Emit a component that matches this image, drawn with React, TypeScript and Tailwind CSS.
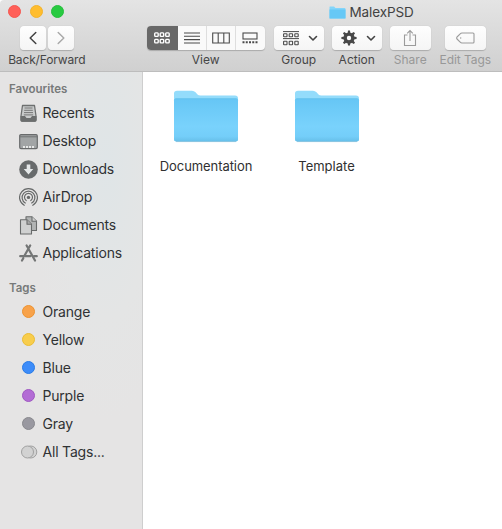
import type { ReactNode } from "react";

function BigFolder({ id }: { id: string }) {
  return (
    <svg width="66" height="54" viewBox="0 0 66 54">
      <defs>
        <linearGradient id={id} x1="0" y1="0" x2="0" y2="1">
          <stop offset="0" stopColor="#66c6f5" />
          <stop offset="0.65" stopColor="#79d2fc" />
          <stop offset="0.88" stopColor="#74cef9" />
          <stop offset="1" stopColor="#66bfe9" />
        </linearGradient>
      </defs>
      <path d="M1 3.500Q1 0.700 4 0.700H19Q21 0.700 22.500 2.200L24.500 4.500Q25.500 5.500 27.500 5.500H62Q65 5.500 65 8.500V49Q65 51.500 62.500 51.500H3.500Q1 51.500 1 49Z" fill="#94dcfb" />
      <path d="M1 10.500Q1 8.500 3 8.500H63Q65 8.500 65 10.500V49Q65 51.500 62.500 51.500H3.500Q1 51.500 1 49Z" fill={`url(#${id})`} />
      <path d="M1.500 9.500Q2 8.700 3 8.700H63Q64 8.700 64.500 9.500" fill="none" stroke="#5fbfea" strokeWidth="0.6" />
      <path d="M3 51.600H63" stroke="#7fb9d3" strokeWidth="0.6" />
    </svg>
  );
}

function Tool({ width, label, muted, spacing = "", children }: { width: string; label: string; muted?: boolean; spacing?: string; children: ReactNode }) {
  return (
    <div className={`flex shrink-0 flex-col items-center ${width}`}>
      <div className="flex h-[24px] w-full">{children}</div>
      <span className={`mt-[2px] whitespace-nowrap text-[12px] leading-[16px] ${spacing} ${muted ? "text-[#989898]" : "text-[#464646]"}`}>{label}</span>
    </div>
  );
}

const button = "flex h-full items-center justify-center rounded-[4px] bg-gradient-to-b from-[#fefefe] to-[#f5f5f5] shadow-[0_0.5px_1px_rgba(0,0,0,0.2)]";

function Chevron() {
  return (
    <svg width="10" height="7" viewBox="0 0 10 7" fill="none" stroke="#444" strokeWidth="1.600" strokeLinecap="round" strokeLinejoin="round">
      <path d="M1.500 1.500L5 5L8.500 1.500" />
    </svg>
  );
}

const places: { name: string; spacing: string; icon: ReactNode }[] = [
  {
    name: "Recents",
    spacing: "tracking-[-0.2px]",
    icon: (
      <>
        <path d="M3.500 1.500H15.500L17 12V16Q17 17 16 17H3Q2 17 2 16V12Z" fill="#c9cbcb" stroke="#6e7070" strokeWidth="1.300" strokeLinejoin="round" />
        <path d="M5.500 4H13.500M5.200 6.300H13.800M5 8.600H14M4.800 10.900H14.200" stroke="#777" strokeWidth="1" />
        <path d="M1.500 12H6L7.500 14H11.500L13 12H17.500V16Q17.500 17.700 16 17.700H3Q1.500 17.700 1.500 16Z" fill="#6c6e6e" />
      </>
    ),
  },
  {
    name: "Desktop",
    spacing: "tracking-[-0.15px]",
    icon: (
      <>
        <rect x="0.7" y="2.600" width="17.600" height="14" rx="1.300" fill="#a2a5a6" stroke="#696b6c" strokeWidth="1.200" />
        <path d="M1 4.800H18" stroke="#717374" strokeWidth="1" />
        <path d="M4 15H15" stroke="#e7e8e8" strokeWidth="1.900" />
        <path d="M6.500 13.800V16M9.500 13.800V16M12.500 13.800V16" stroke="#8c8e8e" strokeWidth="0.8" />
      </>
    ),
  },
  {
    name: "Downloads",
    spacing: "tracking-[-0.25px]",
    icon: (
      <>
        <circle cx="9.500" cy="9.500" r="9.300" fill="#686b6c" />
        <path d="M7.700 4.500H11.300V9H14.300L9.500 14.600L4.700 9H7.700Z" fill="#e5e8e9" />
      </>
    ),
  },
  {
    name: "AirDrop",
    spacing: "tracking-[-0.15px]",
    icon: (
      <g fill="none" stroke="#676969" strokeWidth="1.200" strokeLinecap="round">
        <path d="M5.200 17.300A8.900 8.900 0 1 1 13.800 17.300" />
        <path d="M6.300 15A6.400 6.400 0 1 1 12.700 15" />
        <path d="M7.200 12.600A4 4 0 1 1 11.800 12.600" />
        <circle cx="9.500" cy="9.400" r="1.700" fill="#676969" stroke="none" />
      </g>
    ),
  },
  {
    name: "Documents",
    spacing: "tracking-[-0.2px]",
    icon: (
      <g stroke="#696b6b" strokeWidth="1.100" strokeLinejoin="round">
        <path d="M7 0.8H13L17.500 5.200V14.500H7Z" fill="#b2b4b4" />
        <path d="M13 0.8V5.200H17.500" fill="#d2d3d3" />
        <path d="M1.500 3.800H8L12.500 8.200V18H1.500Z" fill="#d0d1d1" />
        <path d="M8 3.800V8.200H12.500" fill="#aaa" />
      </g>
    ),
  },
  {
    name: "Applications",
    spacing: "tracking-[-0.18px]",
    icon: (
      <g fill="none" stroke="#747676" strokeWidth="2.200" strokeLinecap="round">
        <path d="M7.600 1.500L16 16.500M11.200 1.500L5.700 11.200M4.300 14.200L3 16.500M1.200 12.200H11.300M15.300 12.200H17.800" />
      </g>
    ),
  },
];

const tags = [
  { name: "Orange", dot: "border-[#ed922f] bg-[#f8a24a]" },
  { name: "Yellow", dot: "border-[#ebbc33] bg-[#f8cd4c]" },
  { name: "Blue", dot: "border-[#287be6] bg-[#3d8cf9]" },
  { name: "Purple", dot: "border-[#9f58c2] bg-[#b36cd5]" },
  { name: "Gray", dot: "border-[#88888d] bg-[#9998a0]" },
];

export default function App() {
  return (
    <div className="flex h-[529px] w-[502px] flex-col overflow-hidden rounded-tl-[4px] bg-white font-['Inter','Liberation_Sans',sans-serif]">
      <header className="flex h-[72px] shrink-0 flex-col border-b border-[#bdbdbd] bg-gradient-to-b from-[#e4e4e4] to-[#d0d0d0]">
        <div className="flex h-[26px] shrink-0 items-start">
          <div className="flex gap-[8.500px] pl-[8px] pt-[5px]">
            <i className="size-[13px] rounded-full border border-[#f6564f] bg-[#ff6059]" />
            <i className="size-[13px] rounded-full border border-[#f3b32c] bg-[#ffbd2e]" />
            <i className="size-[13px] rounded-full border border-[#26bf3c] bg-[#28ca41]" />
          </div>
          <div className="ml-[264.500px] flex items-center gap-[4px] pt-[3px]">
            <svg width="17" height="13" viewBox="0 0 17 13">
              <path d="M0.500 1Q0.500 0.500 1 0.500H5L6.500 2H15.500Q16.500 2 16.500 3V12Q16.500 12.500 16 12.500H1Q0.500 12.500 0.500 12Z" fill="#83d5fa" />
              <path d="M0.500 3.500H16.500V12Q16.500 12.500 16 12.500H1Q0.500 12.500 0.500 12Z" fill="#66c8f6" />
            </svg>
            <span className="text-[13.500px] leading-[18px] tracking-[-0.1px] text-[#424242]">MalexPSD</span>
          </div>
        </div>
        <div className="flex pl-[19.500px]">
          <Tool width="w-[54.500px]" label="Back/Forward" spacing="tracking-[-0.15px]">
            <div className={`${button} mr-[1.500px] w-[26.500px]`}>
              <svg width="8" height="14" viewBox="0 0 8 14" fill="none" stroke="#444" strokeWidth="1.500" strokeLinecap="round" strokeLinejoin="round"><path d="M6.800 1.500L1.200 7L6.800 12.500" /></svg>
            </div>
            <div className={`${button} w-[26.500px]`}>
              <svg width="8" height="14" viewBox="0 0 8 14" fill="none" stroke="#aaa" strokeWidth="1.500" strokeLinecap="round" strokeLinejoin="round"><path d="M1.200 1.500L6.800 7L1.200 12.500" /></svg>
            </div>
          </Tool>
          <div className="w-[72.500px] shrink-0" />
          <Tool width="w-[118.500px]" label="View">
            <div className="flex h-full w-full overflow-hidden rounded-[4px] bg-[#fafafa] shadow-[0_0.5px_1px_rgba(0,0,0,0.2)]">
              <div className="flex w-[31.500px] items-center justify-center bg-[#686868]">
                <svg width="16" height="12" viewBox="0 0 16 12" fill="none" stroke="#fff" strokeWidth="1.400">
                  {[0.7, 6.200, 11.700].map((x) => (
                    <g key={x}>
                      <rect x={x} y="0.9" width="3.500" height="3.500" rx="0.800" />
                      <rect x={x} y="7.400" width="3.500" height="3.500" rx="0.800" />
                    </g>
                  ))}
                </svg>
              </div>
              <div className="flex w-[29px] items-center justify-center border-r border-[#dedede]">
                <svg width="16" height="12" viewBox="0 0 16 12" stroke="#4b4b4b" strokeWidth="1.100"><path d="M0 1H16M0 4.300H16M0 7.600H16M0 11H16" /></svg>
              </div>
              <div className="flex w-[29px] items-center justify-center border-r border-[#dedede]">
                <svg width="18" height="12" viewBox="0 0 18 12" fill="none" stroke="#4b4b4b" strokeWidth="1.100"><path d="M0.700 1H17.300V11H0.700ZM6.200 1V11M11.800 1V11" /></svg>
              </div>
              <div className="flex flex-1 items-center justify-center pr-[2px]">
                <svg width="16" height="12" viewBox="0 0 16 12" fill="none" stroke="#4b4b4b" strokeWidth="1.100"><rect x="1" y="1" width="14" height="6" /><path d="M0.500 10.300H16" strokeWidth="1.900" strokeDasharray="2 1.250" /></svg>
              </div>
            </div>
          </Tool>
          <div className="w-[9px] shrink-0" />
          <Tool width="w-[49.500px]" label="Group">
            <div className={`${button} w-full gap-[9px] pl-[4px]`}>
              <svg width="16" height="15" viewBox="0 0 16 15">
                <path d="M0 0.600H16M0 7.600H16" stroke="#4b4b4b" strokeWidth="1" />
                <g fill="none" stroke="#4b4b4b" strokeWidth="1.100">
                  {[0.600, 6.200, 11.800].map((x) => (
                    <g key={x}>
                      <rect x={x} y="2.800" width="3.400" height="2.900" rx="0.500" />
                      <rect x={x} y="10.200" width="3.400" height="3.500" rx="0.500" />
                    </g>
                  ))}
                </g>
              </svg>
              <Chevron />
            </div>
          </Tool>
          <div className="w-[8.500px] shrink-0" />
          <Tool width="w-[49.500px]" label="Action">
            <div className={`${button} w-full gap-[9px] pl-[4px]`}>
              <svg width="16" height="16" viewBox="0 0 16 16">
                <circle cx="8" cy="8" r="3.900" fill="none" stroke="#484848" strokeWidth="3.400" />
                {[0, 45, 90, 135, 180, 225, 270, 315].map((angle) => (
                  <path key={angle} d="M6.500 4L7 0.400H9L9.500 4Z" fill="#484848" transform={`rotate(${angle} 8 8)`} />
                ))}
              </svg>
              <Chevron />
            </div>
          </Tool>
          <div className="w-[8px] shrink-0" />
          <Tool width="w-[41.500px]" label="Share" muted>
            <div className={`${button} w-full`}>
              <svg width="14" height="18" viewBox="0 0 14 18" fill="none" stroke="#9b9b9b" strokeWidth="1.100" className="-mt-[1px]"><path d="M4.500 6H1.500V16.500H12.500V6H9.500M7 12V1.500M4.200 4.300L7 1.500L9.800 4.300" /></svg>
            </div>
          </Tool>
          <div className="w-[13.500px] shrink-0" />
          <Tool width="w-[41.500px]" label="Edit Tags" spacing="tracking-[-0.08px]" muted>
            <div className={`${button} w-full`}>
              <svg width="19" height="12" viewBox="0 0 19 12" fill="none" stroke="#9b9b9b" strokeWidth="1.100" strokeLinejoin="round"><path d="M6 1H17Q18 1 18 2V10Q18 11 17 11H6Q5 11 4.200 10.200L1 7Q0.300 6 1 5L4.200 1.800Q5 1 6 1Z" /><circle cx="4.700" cy="6" r="0.700" fill="#9b9b9b" stroke="none" /></svg>
            </div>
          </Tool>
        </div>
      </header>
      <div className="flex min-h-0 flex-1">
        <aside className="w-[143px] shrink-0 border-r border-[#cecece] bg-[radial-gradient(ellipse_at_75%_20%,#dfe5e7_0%,#e4e5e5_30%,#e5e4e4_50%)] text-[#303234]">
          <h2 className="pl-[9px] pt-[9px] text-[11.500px] font-semibold leading-[16px] text-[#777979]">Favourites</h2>
          <ul className="mt-[2px]">
            {places.map((place) => (
              <li key={place.name} className="flex h-[28px] items-center pl-[19px]">
                <svg width="19" height="19" viewBox="0 0 19 19" className="mr-[4.500px] shrink-0">{place.icon}</svg>
                <span className={`text-[14px] leading-[20px] ${place.spacing}`}>{place.name}</span>
              </li>
            ))}
          </ul>
          <h2 className="mt-[13px] pl-[9px] text-[11.500px] font-semibold leading-[16px] text-[#777979]">Tags</h2>
          <ul className="mt-[2px]">
            {tags.map((tag) => (
              <li key={tag.name} className="flex h-[28px] items-center pl-[22px]">
                <i className={`-mt-[1px] mr-[7.500px] size-[13px] rounded-full border ${tag.dot}`} />
                <span className="text-[14px] leading-[20px] tracking-[-0.2px]">{tag.name}</span>
              </li>
            ))}
            <li className="flex h-[28px] items-center pl-[21px]">
              <svg width="17" height="14" viewBox="0 0 17 14" className="-mt-[1px] mr-[4.500px]" fill="#d2d2d2" stroke="#a1a1a1">
                <circle cx="9.800" cy="7" r="6" />
                <circle cx="6.500" cy="7" r="6" />
              </svg>
              <span className="text-[14px] leading-[20px] tracking-[-0.2px]">All Tags...</span>
            </li>
          </ul>
        </aside>
        <main className="flex flex-1 items-start bg-white pl-[3px] pt-[18px] text-[13px] leading-[18px] text-[#303030]">
          <div className="flex w-[120px] flex-col items-center gap-[13px]">
            <BigFolder id="folder-documentation" />
            <span className="tracking-[-0.07px]">Documentation</span>
          </div>
          <div className="flex w-[121px] flex-col items-center gap-[13px]">
            <BigFolder id="folder-template" />
            <span>Template</span>
          </div>
        </main>
      </div>
    </div>
  );
}
